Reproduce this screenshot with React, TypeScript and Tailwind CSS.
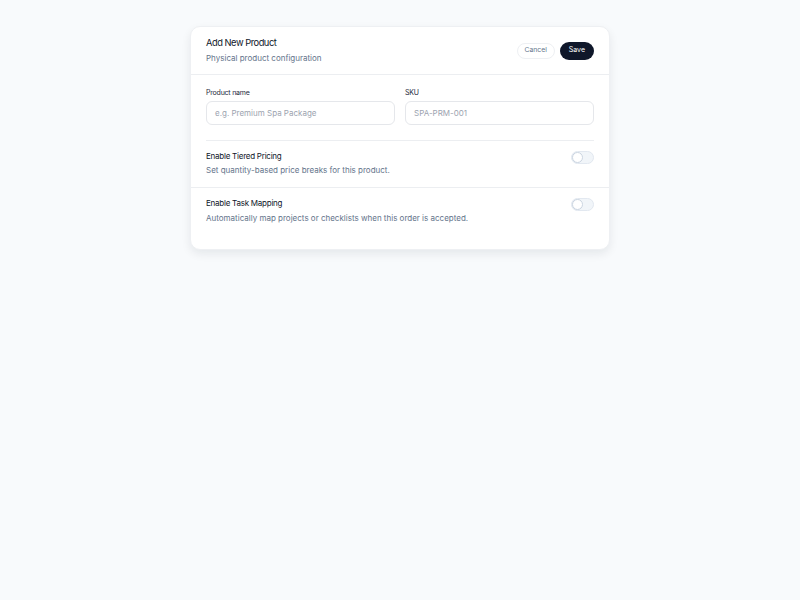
import React from "react";

function Toggle() {
  return (
    <div className="w-[23px] h-[13px] rounded-full bg-[#f1f5f9] border border-[#e2e8f0] flex items-center">
      <div className="w-[11px] h-[11px] rounded-full bg-white border border-[#cbd5e1]" />
    </div>
  );
}

export default function App() {
  return (
    <div className="min-h-screen w-full bg-[#f8fafc] flex justify-center pt-[26px]" style={{ fontFamily: "Inter, 'Noto Sans', sans-serif" }}>
      <div className="w-[420px] h-[224px] bg-white rounded-[10px] border border-[#eef0f3] shadow-[0_4px_10px_rgba(15,23,42,0.08)] flex flex-col">
        <div className="flex items-center justify-between px-[15px] h-[48px] border-b border-[#eceef1]">
          <div className="flex flex-col">
            <div className="text-[9.3px] leading-[14px] tracking-[-0.05em] text-[#0f172a]">Add New Product</div>
            <div className="text-[8px] leading-[13px] text-[#64748b] mt-[2px]">Physical product configuration</div>
          </div>
          <div className="flex items-center gap-[5px]">
            <button className="h-[16px] px-[7px] rounded-full border border-[#eef0f3] text-[6.8px] text-[#64748b] bg-white">Cancel</button>
            <button className="h-[18px] px-[9px] rounded-full bg-[#0f172a] text-[7px] text-white">Save</button>
          </div>
        </div>
        <div className="px-[15px] pt-[13px]">
          <div className="grid grid-cols-2 gap-[10px]">
            <div className="flex flex-col">
              <label className="text-[7px] leading-[10px] tracking-[-0.03em] text-[#1e293b]">Product name</label>
              <div className="mt-[3px] h-[24px] rounded-[6px] border border-[#e5e7eb] flex items-center px-[8px] text-[8px] text-[#9ca3af]">e.g. Premium Spa Package</div>
            </div>
            <div className="flex flex-col">
              <label className="text-[7px] leading-[10px] tracking-[-0.03em] text-[#1e293b]">SKU</label>
              <div className="mt-[3px] h-[24px] rounded-[6px] border border-[#e5e7eb] flex items-center px-[8px] text-[8px] text-[#9ca3af]">SPA-PRM-001</div>
            </div>
          </div>
          <div className="mt-[15px] border-t border-[#eceef1]" />
        </div>
        <div className="flex items-start justify-between px-[15px] pt-[9px] pb-[11px] border-b border-[#eceef1]">
          <div className="flex flex-col">
            <div className="text-[8px] leading-[12px] tracking-[-0.03em] text-[#0f172a]">Enable Tiered Pricing</div>
            <div className="text-[8px] leading-[12px] text-[#64748b] mt-[2px]">Set quantity-based price breaks for this product.</div>
          </div>
          <div className="mt-[1px]"><Toggle /></div>
        </div>
        <div className="flex items-start justify-between px-[15px] pt-[9px]">
          <div className="flex flex-col">
            <div className="text-[8px] leading-[12px] tracking-[-0.03em] text-[#0f172a]">Enable Task Mapping</div>
            <div className="text-[8px] leading-[12px] text-[#64748b] mt-[3px]">Automatically map projects or checklists when this order is accepted.</div>
          </div>
          <div className="mt-[1px]"><Toggle /></div>
        </div>
      </div>
    </div>
  );
}
